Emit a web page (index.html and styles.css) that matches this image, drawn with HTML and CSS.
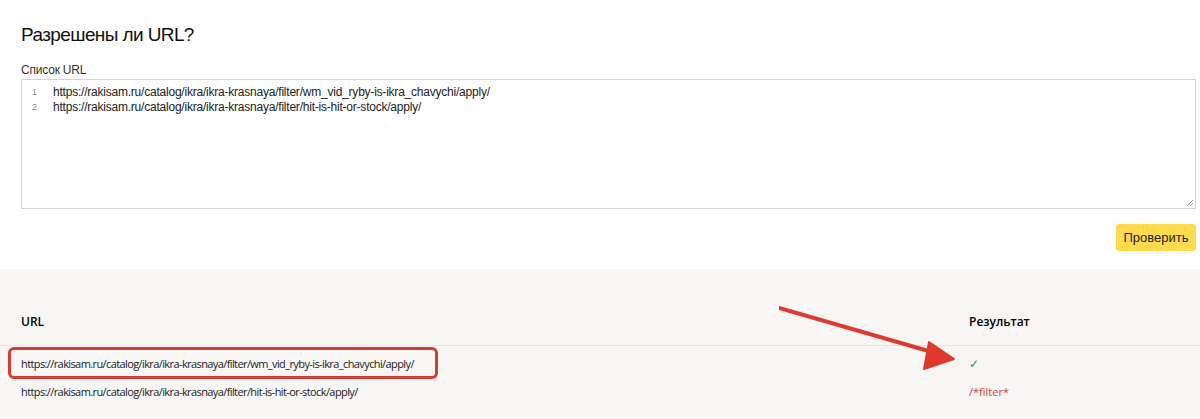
FILE: index.html
```html
<!DOCTYPE html>
<html lang="ru">
<head>
<meta charset="utf-8">
<link rel="stylesheet" href="styles.css">
</head>
<body>
<div class="page">
  <section class="top">
    <h1 class="title">Разрешены ли URL?</h1>
    <div class="label">Список URL</div>
    <div class="editor">
      <div class="line"><span class="num">1</span><span class="code">https://rakisam.ru/catalog/ikra/ikra-krasnaya/filter/wm_vid_ryby-is-ikra_chavychi/apply/</span></div>
      <div class="line"><span class="num">2</span><span class="code">https://rakisam.ru/catalog/ikra/ikra-krasnaya/filter/hit-is-hit-or-stock/apply/</span></div>
      <svg class="grip" width="8" height="8" viewBox="0 0 8 8"><path d="M7 1L1 7M7 4L4 7" stroke="#999" stroke-width="1"/></svg>
    </div>
    <div class="actions"><button class="btn">Проверить</button></div>
  </section>
  <section class="results">
    <div class="thead">
      <div class="c-url">URL</div>
      <div class="c-res">Результат</div>
    </div>
    <div class="row first">
      <div class="c-url"><span class="hl">https://rakisam.ru/catalog/ikra/ikra-krasnaya/filter/wm_vid_ryby-is-ikra_chavychi/apply/</span></div>
      <div class="c-res ok">✓</div>
    </div>
    <div class="row">
      <div class="c-url">https://rakisam.ru/catalog/ikra/ikra-krasnaya/filter/hit-is-hit-or-stock/apply/</div>
      <div class="c-res bad">/*filter*</div>
    </div>
    <svg class="arrow" width="200" height="80" viewBox="0 0 200 80">
      <path d="M0 6 L160 52" stroke="#e03a2f" stroke-width="4" stroke-linecap="round"/>
      <path d="M175 57 L150 40 L145 67 Z" fill="#e03a2f" stroke="#e03a2f" stroke-width="2" stroke-linejoin="round"/>
    </svg>
  </section>
</div>
</body>
</html>
```
FILE: styles.css
```css
html, body { margin: 0; padding: 0; background: #fff; }
body { font-family: "Liberation Sans", Arial, sans-serif; color: #000; }
.page { width: 1200px; height: 419px; overflow: hidden; }
.top { padding: 23px 4px 0 21px; height: 244px; box-sizing: border-box; }
.title { margin: 0; font-weight: normal; font-size: 19px; line-height: 24px; letter-spacing: -0.6px; color: #111; }
.label { margin-top: 15px; font-size: 12px; line-height: 17px; letter-spacing: -0.2px; color: #333; }
.editor { position: relative; height: 130px; border: 1px solid #d4d4d4; box-sizing: border-box; padding-top: 5px; }
.line { display: flex; font-size: 12px; line-height: 15px; color: #222; }
.num { width: 31px; padding-left: 10px; box-sizing: border-box; font-size: 9px; color: #888; }
.code { letter-spacing: -0.22px; }
.grip { position: absolute; right: 1px; bottom: 1px; }
.actions { display: flex; justify-content: flex-end; margin-top: 15px; }
.btn { font-family: inherit; font-size: 13px; background: #ffdb4d; border: none; border-radius: 3px; height: 27px; padding: 0; width: 80px; color: #222; }
.results { position: relative; background: #f7f6f4; height: 175px; margin-top: 25px; padding-top: 44px; box-sizing: border-box; font-family: "Open Sans", sans-serif; }
.thead { display: flex; font-weight: 600; font-size: 12px; line-height: 18px; height: 32px; border-bottom: 1px solid #e6e5e3; }
.row { display: flex; font-size: 11px; height: 28px; align-items: center; color: #222; letter-spacing: -0.6px; }
.row.first { margin-top: 3px; }
.c-url { width: 948px; padding-left: 21px; }
.c-res { flex: 1; letter-spacing: 0; }
.hl { display: inline-block; position: relative; line-height: 15px; }
.hl::before { content: ""; position: absolute; left: -13px; right: -24px; top: -9px; bottom: -8px; border: 3px solid #d63c33; border-radius: 6px; }
.ok { color: #3a9a5c; font-size: 12px; }
.bad { color: #d0403a; }
.arrow { position: absolute; left: 779px; top: 33px; }
```
